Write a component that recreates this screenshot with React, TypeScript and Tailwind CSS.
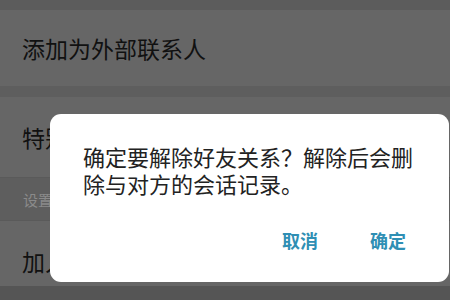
import React from 'react'

const FONT = { fontFamily: '"Noto Sans CJK SC", "Noto Sans", sans-serif' }

export default function App() {
  return (
    <div
      className="relative w-[450px] h-[300px] overflow-hidden bg-[#555555] font-['Noto_Sans_CJK_SC',sans-serif]"
      style={FONT}
    >
      {/* 背景列表 */}
      <div className="flex flex-col">
        <div className="h-[10px] bg-[#5c5c5c]" />
        <div className="h-[76px] bg-[#666666] flex items-center pl-[22px] text-[23px] text-[#111111]">
          添加为外部联系人
        </div>
        <div className="h-[11px] bg-[#5e5e5e]" />
        <div className="h-[80px] bg-[#666666] flex items-center pl-[22px] text-[23px] text-[#111111]">
          特别关心
        </div>
        <div className="h-[43px] bg-[#5e5e5e] border-t border-[#5a5a5a] flex items-center pl-[23px] pt-[3px] text-[15px] text-[#8a8a8a]">
          设置
        </div>
        <div className="h-[66px] bg-[#666666] border-t border-[#5a5a5a] flex items-center pl-[22px] pt-[16px] text-[23px] text-[#111111]">
          加入黑名单
        </div>
      </div>

      {/* 对话框 */}
      <div className="absolute left-[50px] top-[114px] w-[399px] h-[168px] bg-white rounded-[11px]">
        <div className="px-[33px] pt-[29px] text-[22px] leading-[27px] text-[#222222]">
          确定要解除好友关系？解除后会删除与对方的会话记录。
        </div>
        <div className="flex justify-end gap-[52px] pr-[43px] mt-[31px] text-[18px] leading-[24px] font-bold text-[#2f8fb4]">
          <button type="button">取消</button>
          <button type="button">确定</button>
        </div>
      </div>
    </div>
  )
}
